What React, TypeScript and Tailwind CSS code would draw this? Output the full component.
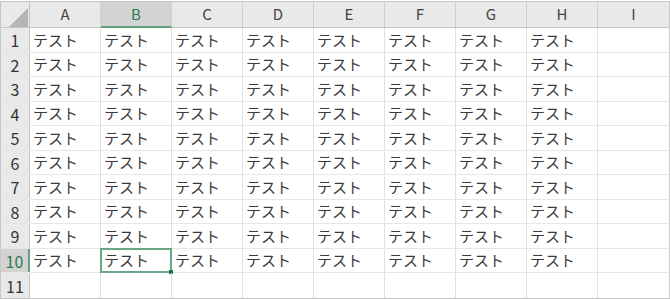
import React from "react";

const cols = ["A", "B", "C", "D", "E", "F", "G", "H", "I"];
const rows = [1, 2, 3, 4, 5, 6, 7, 8, 9, 10, 11];
const rowH = ["h-[25px]", "h-[24px]"];

export default function App() {
  return (
    <div
      className="w-[670px] h-[300px] bg-white pt-[1px]"
      style={{ fontFamily: '"Noto Sans CJK JP", "Noto Sans", sans-serif' }}
    >
      <div className="w-[670px] border border-[#c8c8c8] bg-white">
        {/* header */}
        <div className="flex h-[26px] border-b border-[#c4c4c4] bg-[#e9e9e9]">
          <div className="relative w-[29px] shrink-0 border-r border-[#c4c4c4]">
            <svg className="absolute left-[8px] top-[6px]" width="19" height="19" viewBox="0 0 19 19">
              <polygon points="19,0 19,19 0,19" fill="#b5b5b5" />
            </svg>
          </div>
          {cols.map((c, i) => (
            <div
              key={c}
              className={
                i === 1
                  ? "w-[71px] shrink-0 flex items-center justify-center border-r border-[#d0d0d0] bg-[#d3d3d3] text-[#2a7a50] text-[15px] border-b-2 border-b-[#5fa27c] -mb-[1px]"
                  : i === 8
                  ? "flex-1 flex items-center justify-center text-[#444] text-[15px]"
                  : "w-[71px] shrink-0 flex items-center justify-center border-r border-[#d0d0d0] text-[#444] text-[15px]"
              }
            >
              {c}
            </div>
          ))}
        </div>
        {/* rows */}
        {rows.map((r, ri) => (
          <div key={r} className={`flex ${rowH[ri % 2]} ${ri < 10 ? "border-b border-[#e6e6e6]" : ""}`}>
            <div
              className={
                r === 10
                  ? "w-[29px] shrink-0 flex items-center justify-center bg-[#d3d3d3] border-r-2 border-[#5fa27c] text-[#2a7a50] text-[16px]"
                  : "w-[29px] shrink-0 flex items-center justify-center bg-[#e9e9e9] border-r border-[#c4c4c4] text-[#333] text-[16px]"
              }
            >
              {r}
            </div>
            {cols.map((c, ci) => {
              const selected = r === 10 && ci === 1;
              return (
                <div
                  key={c}
                  className={
                    ci === 8
                      ? "flex-1 flex items-center"
                      : "relative w-[71px] shrink-0 flex items-center border-r border-[#e0e0e0] pl-[3px] text-[15px] text-[#3a3a3a]"
                  }
                >
                  {r <= 10 && ci < 8 ? "テスト" : ""}
                  {selected && (
                    <div className="absolute -left-[1px] -top-[1px] -right-[1px] -bottom-[1px] border-2 border-[#6aa885]">
                      <div className="absolute -right-[3px] -bottom-[3px] w-[4px] h-[4px] bg-[#217346]" />
                    </div>
                  )}
                </div>
              );
            })}
          </div>
        ))}
      </div>
    </div>
  );
}
